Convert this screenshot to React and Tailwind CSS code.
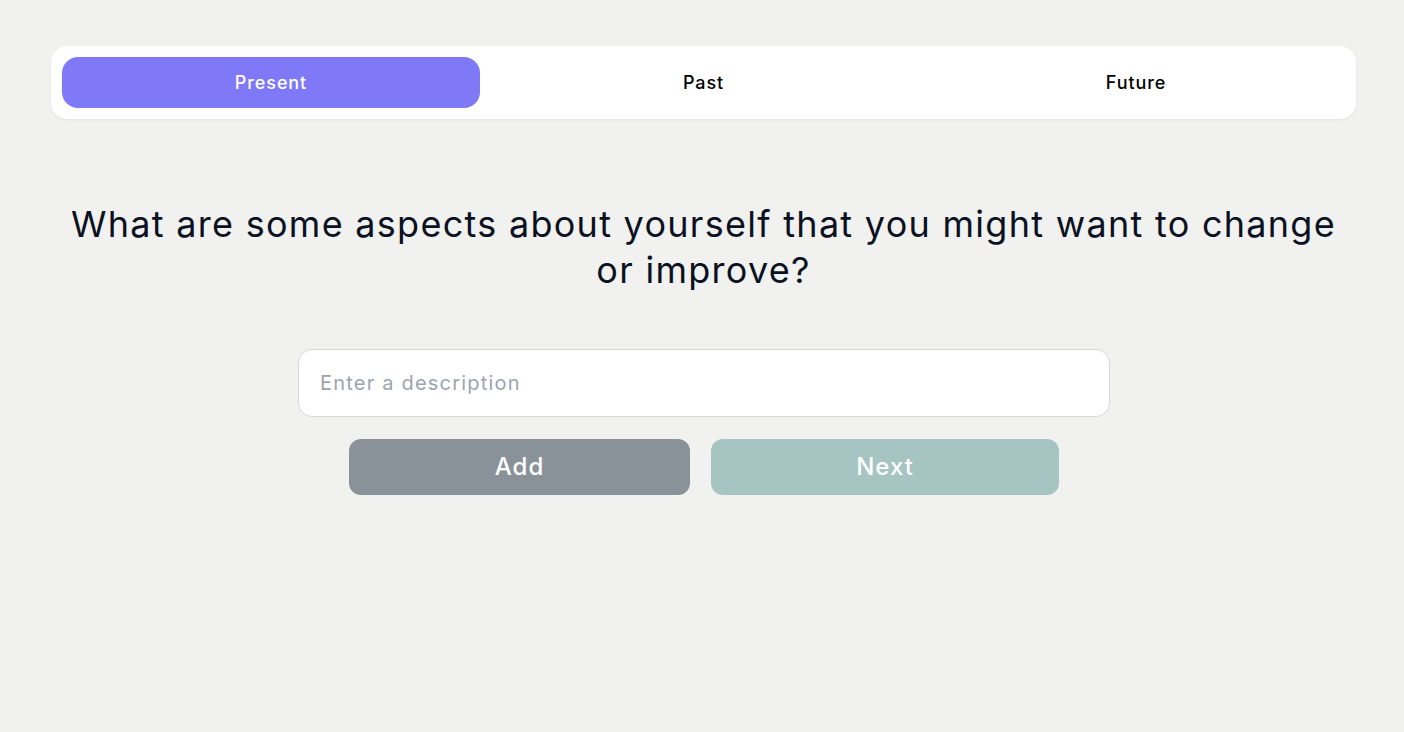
export default function App() {
  return (
    <div className="min-h-[732px] w-full bg-[#f1f1f0] font-['Inter',_'Noto_Sans',_sans-serif]">
      <div className="pl-[51px] pr-[48px] pt-[46px]">
        <div className="flex justify-between rounded-[16px] bg-white p-[11px] shadow-[0_1px_3px_rgba(0,0,0,0.06)]">
          <button className="flex h-[51px] w-[418px] items-center justify-center rounded-[16px] bg-[#7f78f7] text-[18px] font-medium tracking-[0.9px] text-white">
            Present
          </button>
          <button className="flex h-[51px] w-[418px] items-center justify-center rounded-[16px] text-[18px] font-medium tracking-[0.9px] text-black">
            Past
          </button>
          <button className="flex h-[51px] w-[418px] items-center justify-center rounded-[16px] text-[18px] font-medium tracking-[0.9px] text-black">
            Future
          </button>
        </div>
        <h1 className="mx-auto mt-[82px] max-w-[1290px] text-center text-[36px] leading-[46px] tracking-[1.28px] text-[#0b1120]">
          What are some aspects about yourself that you might want to change or improve?
        </h1>
      </div>
      <div className="mt-[56px] flex flex-col items-center pl-[4px]">
        <input
          type="text"
          placeholder="Enter a description"
          className="h-[68px] w-[812px] rounded-[14px] border border-[#d6d6da] bg-white px-[21px] text-[20px] tracking-[1.2px] text-gray-800 outline-none placeholder:text-[#9ca3af]"
        />
        <div className="mt-[22px] flex gap-[21px]">
          <button className="h-[56px] w-[341px] rounded-[12px] bg-[#8a9299] text-[24px] font-medium tracking-[1px] text-white">
            Add
          </button>
          <button className="h-[56px] w-[348px] rounded-[12px] bg-[#a5c4c2] text-[24px] font-medium tracking-[1px] text-white">
            Next
          </button>
        </div>
      </div>
    </div>
  );
}
